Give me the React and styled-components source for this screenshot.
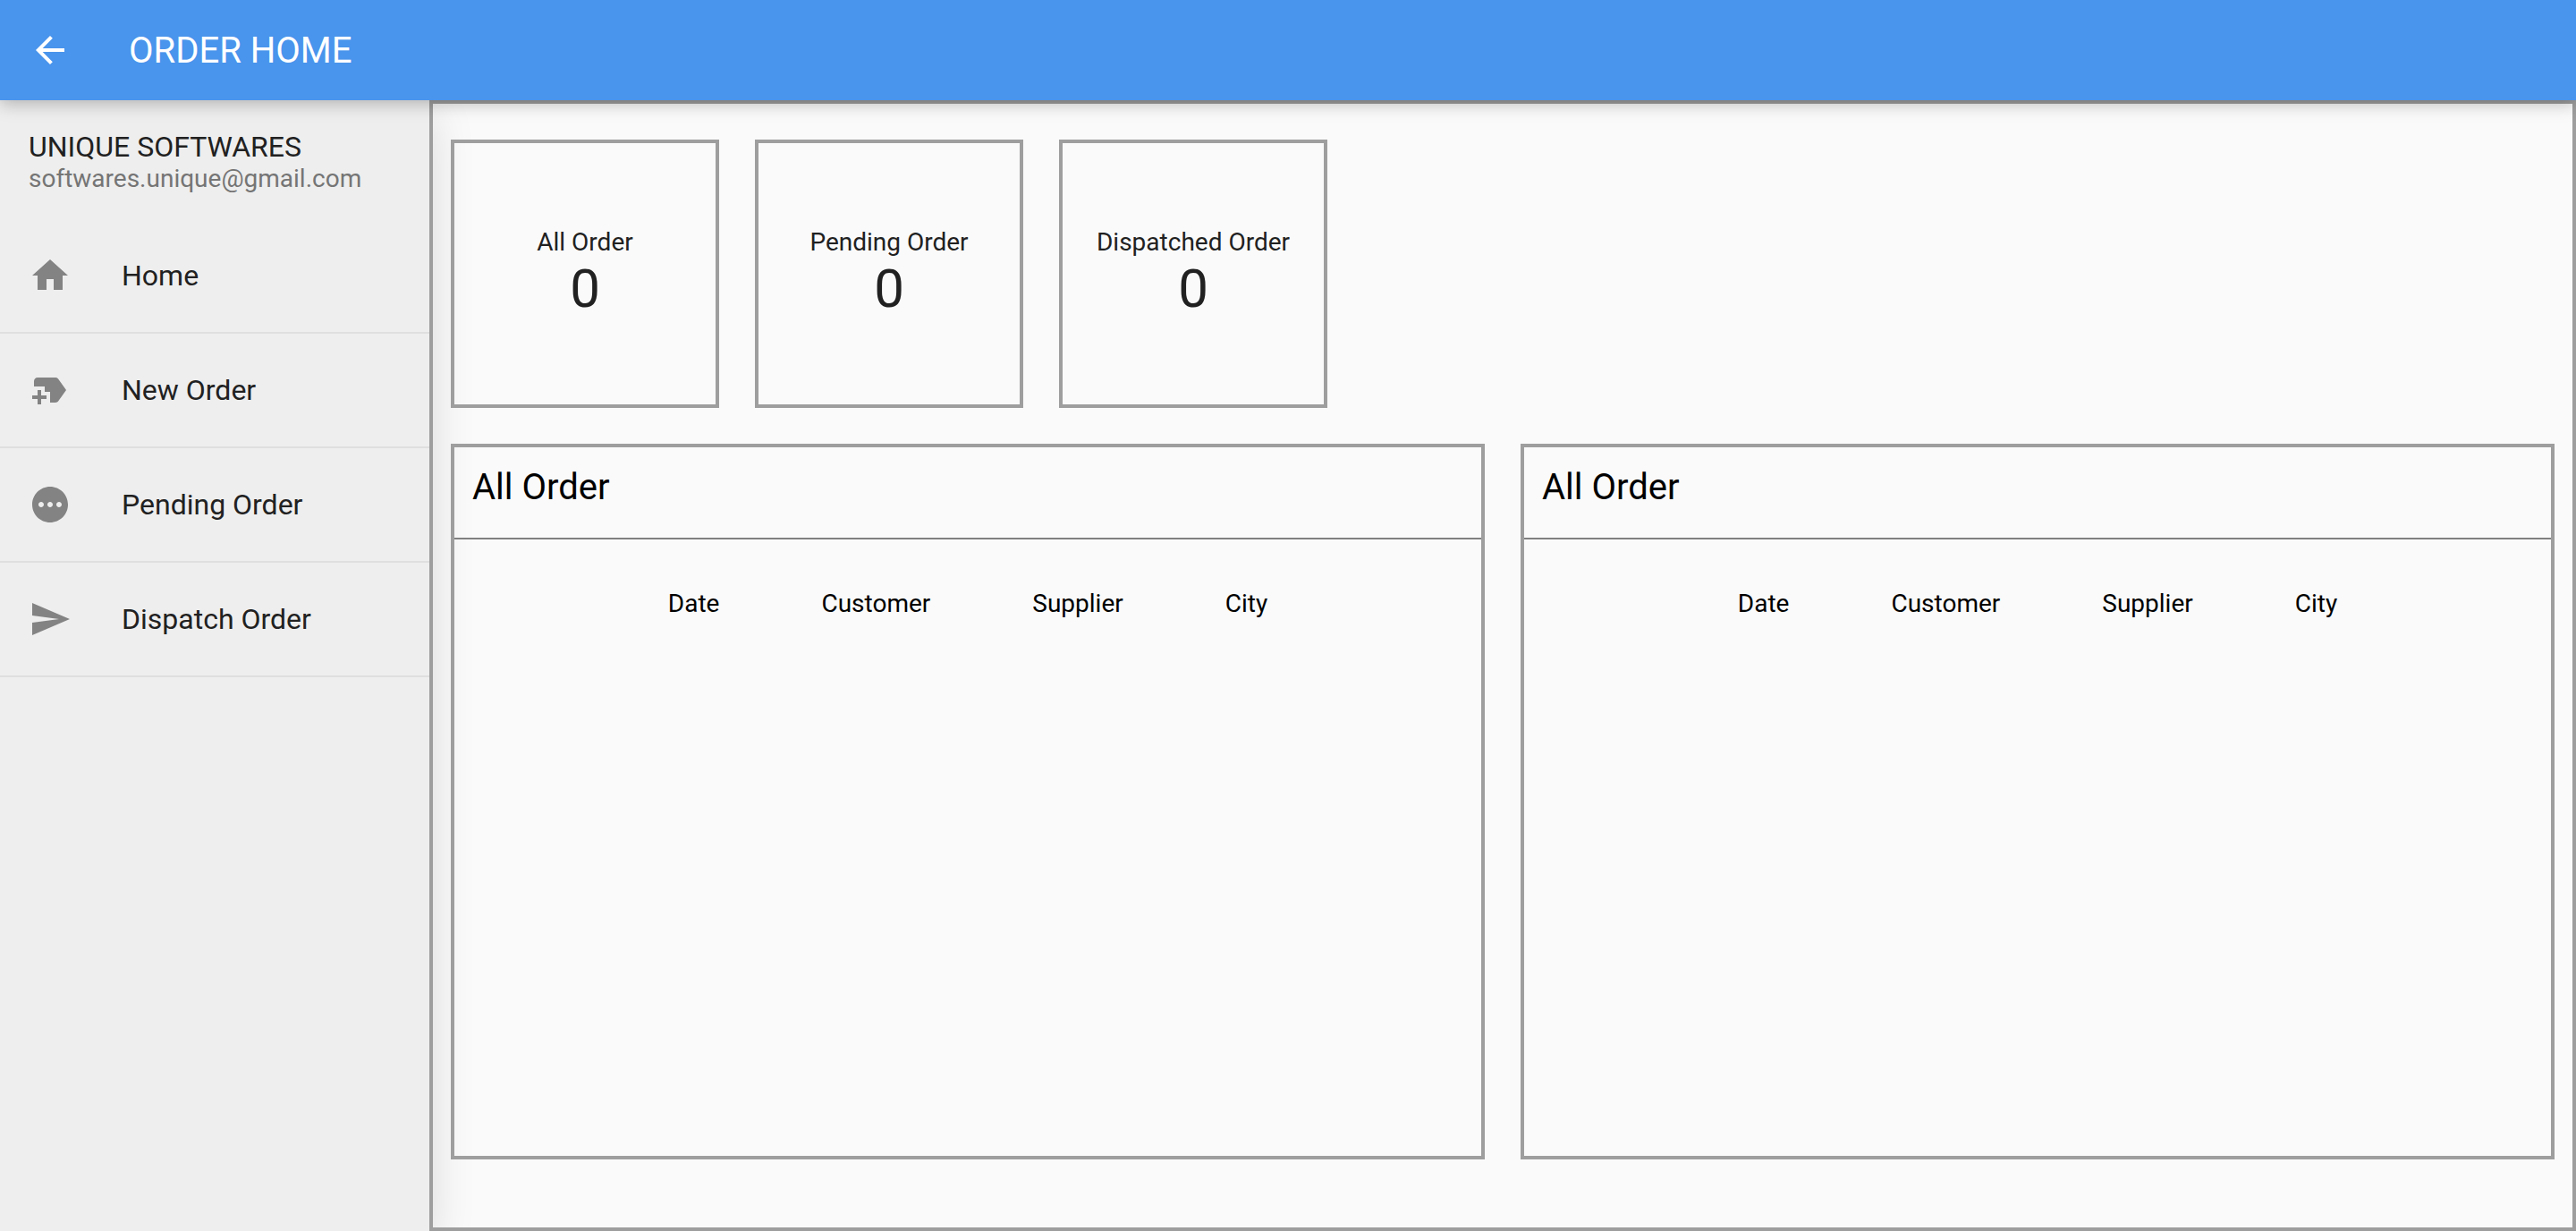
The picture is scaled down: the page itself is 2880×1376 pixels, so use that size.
import React from "react";
import styled, { createGlobalStyle } from "styled-components";

const GlobalStyle = createGlobalStyle`
  *, *::before, *::after { box-sizing: border-box; }
  body {
    margin: 0;
    background: #fafafa;
    color: #212121;
    font-family: Roboto, "Liberation Sans", sans-serif;
    font-size: 28px;
    line-height: 34px;
  }
`;

const Page = styled.div`
  display: flex;
  flex-direction: column;
  min-height: 100vh;
`;

const AppBar = styled.header`
  position: relative;
  z-index: 1;
  display: flex;
  align-items: center;
  gap: 64px;
  height: 112px;
  padding: 0 32px;
  background: #4994ec;
  color: #fff;
  box-shadow: 0 4px 18px rgba(0, 0, 0, 0.26);
`;

const BackButton = styled.button`
  display: flex;
  padding: 0;
  border: 0;
  background: none;
  color: inherit;
  cursor: pointer;
`;

const PageTitle = styled.h1`
  margin: 0;
  padding-top: 2px;
  font-size: 40px;
  line-height: 50px;
  font-weight: 400;
`;

const Icon = styled.svg`
  display: block;
  flex: none;
  width: 48px;
  height: 48px;
  fill: currentColor;
`;

const Body = styled.div`
  display: flex;
  flex: 1;
  overflow: hidden;
`;

const Sidebar = styled.aside`
  flex: none;
  width: 480px;
  background: #eee;
  box-shadow: 0 16px 48px rgba(0, 0, 0, 0.15);
`;

const Account = styled.div`
  height: 133px;
  padding: 33px 32px 0;
`;

const AccountName = styled.div`
  font-size: 32px;
  line-height: 38px;
`;

const AccountMail = styled.div`
  color: #757575;
`;

const NavList = styled.ul`
  margin: 0;
  padding: 0;
  list-style: none;
`;

const NavItem = styled.li`
  border-bottom: 2px solid #dfdfdf;
`;

const NavLink = styled.a`
  display: flex;
  align-items: center;
  gap: 56px;
  height: 126px;
  padding: 0 32px;
  color: #212121;
  font-size: 32px;
  line-height: 38px;
  text-decoration: none;

  ${Icon} { color: #838383; }
`;

const Main = styled.main`
  position: relative;
  flex: 1;
  min-width: 0;
  display: flex;
  flex-direction: column;
  gap: 40px;
  padding: 40px 20px 76px;
  border: 4px solid #9e9e9e;
`;

const Stats = styled.section`
  display: flex;
  flex-wrap: wrap;
  gap: 40px;
`;

const StatCard = styled.div`
  display: flex;
  flex-direction: column;
  align-items: center;
  justify-content: center;
  width: 300px;
  height: 300px;
  border: 4px solid #9e9e9e;
`;

const StatValue = styled.div`
  font-size: 60px;
  line-height: 70px;
`;

const Panels = styled.section`
  display: grid;
  grid-template-columns: 1fr 1fr;
  gap: 40px;
  flex: 1;
`;

const Panel = styled.article`
  display: flex;
  flex-direction: column;
  align-items: center;
  min-height: 800px;
  border: 4px solid #9e9e9e;
  color: #000;
`;

const PanelTitle = styled.h2`
  align-self: stretch;
  height: 103px;
  margin: 0 0 16px;
  padding: 20px;
  border-bottom: 2px solid #808080;
  font-size: 40px;
  line-height: 50px;
  font-weight: 400;
`;

const OrderTable = styled.table`
  border-collapse: collapse;

  th {
    height: 112px;
    padding: 0 57px;
    font-weight: 400;
    text-align: left;
  }
  th:first-child { padding-left: 48px; }
  th:last-child { padding-right: 48px; }
`;

const ICONS = {
  back: "M20 11H7.83l5.59-5.59L12 4l-8 8 8 8 1.41-1.41L7.83 13H20v-2z",
  home: "M10 20v-6h4v6h5v-8h3L12 3 2 12h3v8z",
  newLabel:
    "M21 12l-4.37 6.16c-.37.52-.98.84-1.63.84h-3v-6H9v-3H3V7c0-1.1.9-2 2-2h10c.65 0 1.26.31 1.63.84L21 12zm-11 3H7v-3H5v3H2v2h3v3h2v-3h3v-2z",
  pending:
    "M12 2C6.48 2 2 6.48 2 12s4.48 10 10 10 10-4.48 10-10S17.52 2 12 2zM7 13.5c-.83 0-1.5-.67-1.5-1.5s.67-1.5 1.5-1.5 1.5.67 1.5 1.5-.67 1.5-1.5 1.5zm5 0c-.83 0-1.5-.67-1.5-1.5s.67-1.5 1.5-1.5 1.5.67 1.5 1.5-.67 1.5-1.5 1.5zm5 0c-.83 0-1.5-.67-1.5-1.5s.67-1.5 1.5-1.5 1.5.67 1.5 1.5-.67 1.5-1.5 1.5z",
  send: "M2.01 21L23 12 2.01 3 2 10l15 2-15 2z",
};

const NAV = [
  { icon: "home", label: "Home" },
  { icon: "newLabel", label: "New Order" },
  { icon: "pending", label: "Pending Order" },
  { icon: "send", label: "Dispatch Order" },
];

const STATS = [
  { label: "All Order", value: 0 },
  { label: "Pending Order", value: 0 },
  { label: "Dispatched Order", value: 0 },
];

const COLUMNS = ["Date", "Customer", "Supplier", "City"];
const PANELS = [
  { id: "left", title: "All Order" },
  { id: "right", title: "All Order" },
];

function Glyph({ name }) {
  return (
    <Icon viewBox="0 0 24 24" aria-hidden="true">
      <path d={ICONS[name]} />
    </Icon>
  );
}

function OrderPanel({ title }) {
  return (
    <Panel>
      <PanelTitle>{title}</PanelTitle>
      <OrderTable>
        <thead>
          <tr>
            {COLUMNS.map((column) => (
              <th key={column} scope="col">{column}</th>
            ))}
          </tr>
        </thead>
      </OrderTable>
    </Panel>
  );
}

export default function App() {
  return (
    <Page>
      <GlobalStyle />
      <AppBar>
        <BackButton type="button" aria-label="Back">
          <Glyph name="back" />
        </BackButton>
        <PageTitle>ORDER HOME</PageTitle>
      </AppBar>
      <Body>
        <Sidebar>
          <Account>
            <AccountName>UNIQUE SOFTWARES</AccountName>
            <AccountMail>softwares.unique@gmail.com</AccountMail>
          </Account>
          <nav>
            <NavList>
              {NAV.map(({ icon, label }) => (
                <NavItem key={label}>
                  <NavLink href="#">
                    <Glyph name={icon} />
                    {label}
                  </NavLink>
                </NavItem>
              ))}
            </NavList>
          </nav>
        </Sidebar>
        <Main>
          <Stats>
            {STATS.map(({ label, value }) => (
              <StatCard key={label}>
                <div>{label}</div>
                <StatValue>{value}</StatValue>
              </StatCard>
            ))}
          </Stats>
          <Panels>
            {PANELS.map(({ id, title }) => (
              <OrderPanel key={id} title={title} />
            ))}
          </Panels>
        </Main>
      </Body>
    </Page>
  );
}
